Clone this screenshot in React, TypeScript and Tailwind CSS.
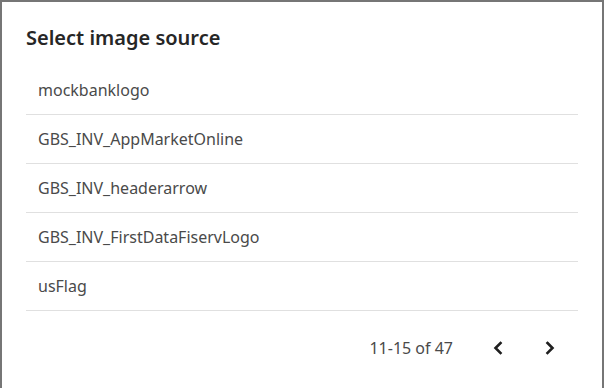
const sources = [
  "mockbanklogo",
  "GBS_INV_AppMarketOnline",
  "GBS_INV_headerarrow",
  "GBS_INV_FirstDataFiservLogo",
  "usFlag",
];

function Chevron({ dir }: { dir: "left" | "right" }) {
  return (
    <svg width="12" height="14" viewBox="0 0 12 14" fill="none" aria-hidden>
      <path
        d={dir === "left" ? "M8.5 2 L3.5 7 L8.5 12" : "M3.5 2 L8.5 7 L3.5 12"}
        stroke="#1f1f1f"
        strokeWidth="2.6"
        strokeLinecap="square"
        strokeLinejoin="miter"
      />
    </svg>
  );
}

export default function App() {
  return (
    <div
      className="w-[604px] h-[388px] bg-white border-t-2 border-x-2 border-[#767676] text-[#4a4a4a]"
      style={{ fontFamily: '"Segoe UI", "Noto Sans", "Open Sans", sans-serif' }}
    >
      <div className="px-6 pt-[22px]">
        <h2 className="h-7 text-[20px] leading-7 font-semibold text-[#262626]">
          Select image source
        </h2>

        <ul className="mt-[14px]">
          {sources.map((s) => (
            <li
              key={s}
              className="h-[49px] flex items-center pl-3 border-b border-[#e0e0e0] text-[16px]"
            >
              {s}
            </li>
          ))}
        </ul>

        <div className="h-[74px] flex items-center justify-end pr-2">
          <span className="text-[16px] text-[#4a4a4a] mr-[25px]">11-15 of 47</span>
          <div className="flex gap-3">
            <button type="button" aria-label="Previous page" className="w-10 h-10 flex items-center justify-center">
              <Chevron dir="left" />
            </button>
            <button type="button" aria-label="Next page" className="w-10 h-10 flex items-center justify-center">
              <Chevron dir="right" />
            </button>
          </div>
        </div>
      </div>
    </div>
  );
}
